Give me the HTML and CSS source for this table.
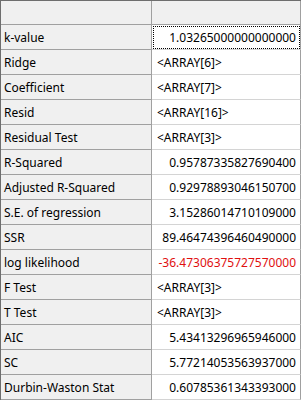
FILE: index.html
```html
<!DOCTYPE html>
<html>
<head>
<meta charset="utf-8">
<link rel="stylesheet" href="styles.css">
</head>
<body>
<div class="grid">
  <div class="cell head"></div><div class="cell head"></div>
  <div class="cell label">k-value</div><div class="cell val num focus">1.03265000000000000</div>
  <div class="cell label">Ridge</div><div class="cell val">&lt;ARRAY[6]&gt;</div>
  <div class="cell label">Coefficient</div><div class="cell val">&lt;ARRAY[7]&gt;</div>
  <div class="cell label">Resid</div><div class="cell val">&lt;ARRAY[16]&gt;</div>
  <div class="cell label">Residual Test</div><div class="cell val">&lt;ARRAY[3]&gt;</div>
  <div class="cell label">R-Squared</div><div class="cell val num">0.95787335827690400</div>
  <div class="cell label">Adjusted R-Squared</div><div class="cell val num">0.92978893046150700</div>
  <div class="cell label">S.E. of regression</div><div class="cell val num">3.15286014710109000</div>
  <div class="cell label">SSR</div><div class="cell val num">89.46474396460490000</div>
  <div class="cell label">log likelihood</div><div class="cell val num neg">-36.47306375727570000</div>
  <div class="cell label">F Test</div><div class="cell val">&lt;ARRAY[3]&gt;</div>
  <div class="cell label">T Test</div><div class="cell val">&lt;ARRAY[3]&gt;</div>
  <div class="cell label">AIC</div><div class="cell val num">5.43413296965946000</div>
  <div class="cell label">SC</div><div class="cell val num">5.77214053563937000</div>
  <div class="cell label">Durbin-Waston Stat</div><div class="cell val num">0.60785361343393000</div>
</div>
</body>
</html>
```
FILE: styles.css
```css
html, body {
  margin: 0;
  padding: 0;
  background: #ffffff;
  overflow: hidden;
}
.grid {
  width: 301px;
  height: 400px;
  box-sizing: border-box;
  border-top: 1px solid #6e6e6e;
  border-left: 1px solid #6e6e6e;
  display: grid;
  grid-template-columns: 151px 149px;
  grid-template-rows: 24px;
  grid-auto-rows: 25px;
  overflow: hidden;
  font-family: "Noto Sans", "Liberation Sans", sans-serif;
  font-size: 12px;
  color: #000;
}
.cell {
  box-sizing: border-box;
  display: flex;
  align-items: center;
  white-space: nowrap;
  overflow: hidden;
}
.head {
  background: #f0f0f0;
  border-right: 1px solid #a0a0a0;
  border-bottom: 1px solid #a0a0a0;
}
.label {
  background: #f0f0f0;
  border-right: 1px solid #a0a0a0;
  border-bottom: 1px solid #a0a0a0;
  padding-left: 3px;
}
.val {
  background: #ffffff;
  border-right: 1px solid #a0a0a0;
  border-bottom: 1px solid #d4d4d4;
  padding-left: 5px;
  padding-right: 4px;
}
.num {
  justify-content: flex-end;
}
.neg {
  color: #e01010;
}
.focus {
  outline: 1px dotted #000;
  outline-offset: -2px;
}
```
